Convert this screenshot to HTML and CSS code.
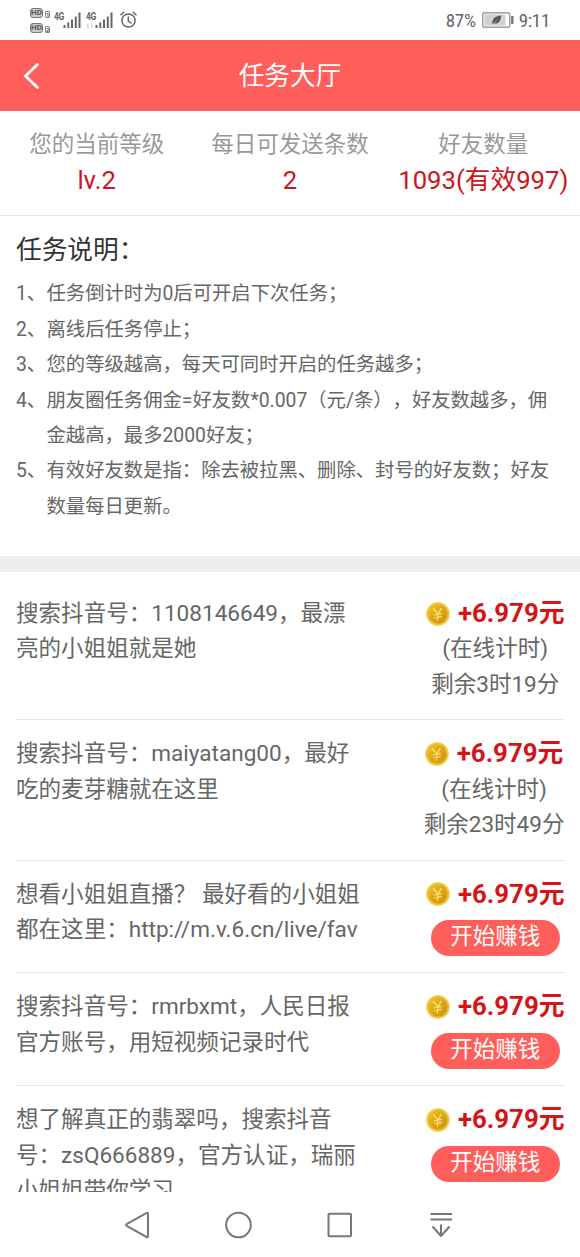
FILE: index.html
```html
<!DOCTYPE html>
<html lang="zh-CN">
<head>
<meta charset="utf-8">
<title>任务大厅</title>
<link rel="stylesheet" href="styles.css">
</head>
<body>
<svg class="defs" width="0" height="0" aria-hidden="true">
  <defs>
    <linearGradient id="gold" x1="0" y1="0" x2="1" y2="1">
      <stop offset="0" stop-color="#f0c52c"/><stop offset=".5" stop-color="#dda514"/><stop offset="1" stop-color="#cf920c"/>
    </linearGradient>
    <symbol id="coin" viewBox="0 0 24 24">
      <circle cx="12" cy="12" r="12" fill="#f3dc72"/>
      <circle cx="12" cy="12" r="10.9" fill="#e9c136"/>
      <circle cx="12" cy="12" r="9.4" fill="url(#gold)"/>
      <path d="M7.500 6.800l4.500 5 3.200-5.400M12 11.800l-.5 6.200M8.400 12.800l6.800-1.300M8.700 15.700l6.500-1.200" fill="none" stroke="#f8df70" stroke-width="1.300" stroke-linecap="round"/>
    </symbol>
    <symbol id="signal" viewBox="0 0 18 17">
      <path d="M1.500 13v3M5.300 10.500V16M9 7.500V16M12.800 4.500V16M16.500 .5V16" stroke="#666" stroke-width="2" fill="none"/>
    </symbol>
  </defs>
</svg>
<div class="phone">
  <div class="status">
    <div class="status-left">
      <div class="hd-col">
        <div class="hd-row"><span class="hd">HD</span><span class="sim">1</span></div>
        <div class="hd-row"><span class="hd">HD</span><span class="sim">2</span></div>
      </div>
      <div class="net"><span class="gen">4G</span></div>
      <svg class="bars" width="18" height="17"><use href="#signal"/></svg>
      <div class="net net-second"><span class="gen">4G</span>
        <svg width="8" height="6" viewBox="0 0 8 6"><path d="M2 6V1L.5 2.500M5.500 0v5L7 3.500" stroke="#ccc" fill="none"/></svg>
      </div>
      <svg class="bars" width="18" height="17"><use href="#signal"/></svg>
      <svg class="alarm" width="17" height="18" viewBox="0 0 17 18" fill="none" stroke="#666" stroke-width="1.500" stroke-linecap="round">
        <circle cx="8.500" cy="9.500" r="6.600"/><path d="M8.300 6v4l2.700 2M1 3.800L3.800 1.200M16 3.800l-2.800-2.600"/>
      </svg>
    </div>
    <div class="status-right">
      <span>87%</span>
      <svg class="battery" width="32" height="16" viewBox="0 0 32 16">
        <rect x=".8" y=".8" width="27" height="14.400" rx="1.500" fill="#fff" stroke="#888" stroke-width="1.200"/>
        <rect x="2.500" y="2.500" width="21" height="11" fill="#d0d0d0"/>
        <path d="M30.300 4v8" stroke="#777" stroke-width="2.400"/>
        <path d="M10.500 12.500c-.8-5 2-8.500 8.500-9 0 5.500-2.500 8.800-7 7.800z" fill="#555"/>
        <path d="M10.800 12.200l4.700-5" stroke="#aaa" stroke-width=".7"/>
      </svg>
      <span>9:11</span>
    </div>
  </div>

  <header class="titlebar">
    <svg class="back" width="18" height="28" viewBox="0 0 18 28"><path d="M15.500 2.500L3.500 14l12 11.500" fill="none" stroke="#fff" stroke-width="2.800" stroke-linecap="round"/></svg>
    <h1>任务大厅</h1>
  </header>

  <section class="stats">
    <div class="stat"><div class="label">您的当前等级</div><div class="value">lv.2</div></div>
    <div class="stat"><div class="label">每日可发送条数</div><div class="value">2</div></div>
    <div class="stat"><div class="label">好友数量</div><div class="value">1093(有效997)</div></div>
  </section>

  <section class="notes">
    <h2>任务说明：</h2>
    <ol>
      <li><span class="num">1、</span><span>任务倒计时为0后可开启下次任务；</span></li>
      <li><span class="num">2、</span><span>离线后任务停止；</span></li>
      <li><span class="num">3、</span><span>您的等级越高，每天可同时开启的任务越多；</span></li>
      <li><span class="num">4、</span><span>朋友圈任务佣金=好友数*0.007（元/条），好友数越多，佣<br>金越高，最多2000好友；</span></li>
      <li><span class="num">5、</span><span>有效好友数是指：除去被拉黑、删除、封号的好友数；好友<br>数量每日更新。</span></li>
    </ol>
  </section>

  <section class="tasks">
    <article class="task">
      <p class="desc">搜索抖音号：1108146649，最漂<br>亮的小姐姐就是她</p>
      <div class="reward">
        <div class="money"><svg class="coin"><use href="#coin"/></svg><b>+6.979元</b></div>
        <div class="timer">(在线计时)</div><div class="timer">剩余3时19分</div>
      </div>
    </article>
    <article class="task">
      <p class="desc">搜索抖音号：maiyatang00，最好<br>吃的麦芽糖就在这里</p>
      <div class="reward">
        <div class="money"><svg class="coin"><use href="#coin"/></svg><b>+6.979元</b></div>
        <div class="timer">(在线计时)</div><div class="timer">剩余23时49分</div>
      </div>
    </article>
    <article class="task open">
      <p class="desc">想看小姐姐直播？ 最好看的小姐姐<br>都在这里：http://m.v.6.cn/live/fav</p>
      <div class="reward">
        <div class="money"><svg class="coin"><use href="#coin"/></svg><b>+6.979元</b></div>
        <button class="start">开始赚钱</button>
      </div>
    </article>
    <article class="task open">
      <p class="desc">搜索抖音号：rmrbxmt，人民日报<br>官方账号，用短视频记录时代</p>
      <div class="reward">
        <div class="money"><svg class="coin"><use href="#coin"/></svg><b>+6.979元</b></div>
        <button class="start">开始赚钱</button>
      </div>
    </article>
    <article class="task open">
      <p class="desc">想了解真正的翡翠吗，搜索抖音<br>号：zsQ666889，官方认证，瑞丽<br>小姐姐带你学习</p>
      <div class="reward">
        <div class="money"><svg class="coin"><use href="#coin"/></svg><b>+6.979元</b></div>
        <button class="start">开始赚钱</button>
      </div>
    </article>
  </section>

  <nav class="navbar">
    <svg viewBox="0 0 32 32"><path d="M26 4.500v23a.8.8 0 0 1-1.200.6L4.600 16.800a.9.9 0 0 1 0-1.600L24.800 3.900a.8.8 0 0 1 1.200.6z"/></svg>
    <svg viewBox="0 0 32 32"><circle cx="15.500" cy="16" r="12.300"/></svg>
    <svg viewBox="0 0 32 32"><rect x="4.500" y="4.800" width="22.500" height="22.500" rx="1"/></svg>
    <svg viewBox="0 0 32 32"><path d="M5.500 5h21.500M5.500 10.500h21.500M16 15.500v11.500M7.500 17.500L16 27l8.500-9.500"/></svg>
  </nav>
</div>
</body>
</html>
```

FILE: styles.css
```css
* { box-sizing: border-box; margin: 0; padding: 0; }
body {
  width: 580px;
  background: #fff;
  color: #666;
  font-family: Roboto, "Noto Sans CJK SC", sans-serif;
  text-spacing-trim: space-all;
}
.defs { display: block; height: 0; }
.phone { display: flex; flex-direction: column; height: 1257px; overflow: hidden; }

.status {
  display: flex; flex: none; justify-content: space-between; align-items: center;
  height: 40px; padding: 0 30px;
}
.status-left, .status-right { display: flex; align-items: center; }
.status-right { font-family: "Roboto Condensed", Roboto, sans-serif; font-size: 19px; letter-spacing: -.3px; color: #666; }
.battery { margin: 0 5px 0 6px; }
.hd-col { display: flex; flex-direction: column; gap: 5px; width: 23px; }
.hd-row { display: flex; align-items: flex-end; gap: 2px; height: 10px; }
.hd {
  width: 13px; height: 10px; border: 1px solid #777; border-radius: 3px;
  background: #ccc; color: #555; font-size: 8px; font-weight: 700; line-height: 8px; text-align: center;
}
.sim { width: 5px; height: 7px; border: 1px solid #888; border-radius: 1px; font-size: 6px; font-weight: 700; line-height: 6px; text-align: center; color: #555; }
.net { width: 10px; height: 17px; margin-left: 1px; font-size: 10px; font-weight: 700; line-height: 9px; letter-spacing: -.5px; }
.gen { display: block; width: 12px; transform: scaleX(.85); transform-origin: left; }
.net svg { display: block; margin-top: 2px; }
.net-second { margin-left: 5px; }
.bars { margin-left: -1px; }
.alarm { margin-left: 7px; }

.titlebar {
  position: relative; display: flex; flex: none; justify-content: center; align-items: center;
  height: 71px; background: #ff5e5b; color: #fff;
}
.titlebar h1 { font-size: 25.700px; font-weight: 400; line-height: 38px; }
.back { position: absolute; left: 22px; top: 22px; }

.stats {
  display: grid; grid-template-columns: repeat(3, 1fr); flex: none;
  height: 105px; padding-top: 15px; border-bottom: 1px solid #e8e8e8; text-align: center; white-space: nowrap;
}
.label { font-size: 22.500px; line-height: 36px; color: #999; }
.value { font-size: 25.700px; line-height: 36px; color: #cc1619; }

.notes { flex: none; height: 356px; padding: 15px 16px 0; border-bottom: 16px solid #eee; white-space: nowrap; }
.notes h2 { font-size: 25.700px; font-weight: 400; line-height: 38px; color: #333; }
.notes ol { list-style: none; padding-top: 7.400px; font-size: 19.330px; line-height: 35.400px; }
.notes li { display: flex; }
.num { width: 30.500px; }

.tasks { flex: none; height: 620px; padding: 8px 15.500px 0 16px; overflow: hidden; }
.task {
  display: flex; justify-content: space-between;
  height: 140.300px; padding: 16px 0; border-bottom: 1px solid #e6e6e6; white-space: nowrap;
}
.task.open { height: 112.800px; }
.task.open:last-child { height: 160px; }
.desc, .timer { font-size: 22.560px; line-height: 35.400px; }
.reward { display: flex; flex-direction: column; align-items: center; }
.money { display: flex; align-items: center; height: 35.400px; color: #d41417; font-size: 25.800px; line-height: 35.400px; }
.coin { width: 24px; height: 24px; margin-right: 8px; }
.start {
  width: 129px; height: 36px; margin-top: 8.400px; border: 0; border-radius: 18px;
  background: #ff5e5b; color: #fff; font: 22.500px/33px Roboto, "Noto Sans CJK SC", sans-serif;
  padding-bottom: 3px;
}

.navbar { display: flex; flex: none; align-items: center; gap: 69px; height: 65px; padding-left: 122px; }
.navbar svg { width: 32px; height: 32px; fill: none; stroke: #777; stroke-width: 2; stroke-linejoin: round; }
```
